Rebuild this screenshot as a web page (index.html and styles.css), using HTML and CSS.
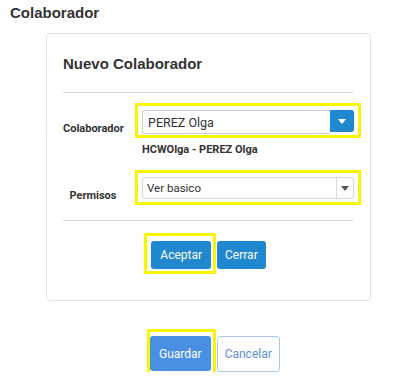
FILE: index.html
```html
<!DOCTYPE html>
<html lang="es">

<head>
    <meta charset="UTF-8" />
    <meta name="viewport" content="width=device-width, initial-scale=1.0" />
    <title>Colaborador</title>
    <link rel="stylesheet" href="styles.css">
</head>

<body>
    <h1 class="page-title">Colaborador</h1>

    <div class="card">
        <h2 class="card-title">Nuevo Colaborador</h2>
        <hr class="divider" />

        <div class="form-row">
            <label class="form-label">Colaborador</label>
            <div class="field">
                <div class="combo mark">
                    <span class="combo-value">PEREZ Olga</span>
                    <span class="combo-btn">
                        <svg width="8" height="5" viewBox="0 0 8 5"><path d="M0 0h8L4 5z" fill="#fff" /></svg>
                    </span>
                </div>
                <div class="field-note">HCWOlga - PEREZ Olga</div>
            </div>
        </div>

        <div class="form-row second">
            <label class="form-label">Permisos</label>
            <div class="field">
                <div class="select mark">
                    <span class="select-value">Ver basico</span>
                    <span class="select-arrow">
                        <svg width="8" height="5" viewBox="0 0 8 5"><path d="M0 0h8L4 5z" fill="#555" /></svg>
                    </span>
                </div>
            </div>
        </div>

        <hr class="divider bottom" />

        <div class="card-actions">
            <button class="btn btn-blue mark">Aceptar</button>
            <button class="btn btn-blue">Cerrar</button>
        </div>
    </div>

    <div class="page-actions">
        <button class="btn btn-save mark">Guardar</button>
        <button class="btn btn-cancel">Cancelar</button>
    </div>
</body>

</html>
```

FILE: styles.css
```css
body {
    margin: 0;
    font-family: Roboto, "Liberation Sans", Arial, sans-serif;
    color: #333;
    background: #fff;
}

.page-title {
    margin: 0;
    padding: 4px 0 0 10px;
    font-family: "Liberation Sans", Arial, sans-serif;
    font-size: 15px;
    line-height: 18px;
    font-weight: bold;
    color: #333;
}

.card {
    width: 291px;
    margin: 11px 0 0 46px;
    padding: 21px 16px 31px 16px;
    border: 1px solid #e2e2e2;
    border-radius: 4px;
}

.card-title {
    margin: 0;
    font-family: "Liberation Sans", Arial, sans-serif;
    font-size: 15px;
    line-height: 18px;
    font-weight: bold;
    color: #333;
}

.divider {
    margin: 19px 0 0;
    border: none;
    border-top: 1px solid #dedede;
}

.divider.bottom {
    margin-top: 17px;
}

.form-row {
    display: grid;
    grid-template-columns: 60px 1fr;
    column-gap: 19px;
    margin-top: 17px;
}

.form-row.second {
    margin-top: 21px;
}

.form-label {
    padding-top: 12px;
    font-size: 11px;
    line-height: 14px;
    font-weight: bold;
    text-align: center;
    color: #333;
    white-space: nowrap;
}

/* yellow highlight frame drawn over the element */
.mark {
    position: relative;
}

.mark::after {
    content: "";
    position: absolute;
    top: -7px;
    right: -7px;
    bottom: -4px;
    left: -7px;
    border: 3px solid #f7f700;
    pointer-events: none;
}

.combo {
    display: flex;
    height: 24px;
}

.combo-value {
    flex: 1;
    display: flex;
    align-items: center;
    padding-left: 5px;
    border: 1px solid #d0d0d0;
    border-right: none;
    border-radius: 3px 0 0 3px;
    font-size: 12.5px;
    color: #333;
}

.combo-btn {
    width: 24px;
    height: 22px;
    display: flex;
    align-items: center;
    justify-content: center;
    background: #1f88cf;
    border-radius: 0 3px 3px 0;
}

.field-note {
    margin-top: 9px;
    font-size: 11px;
    line-height: 13px;
    font-weight: bold;
    color: #333;
}

.select {
    display: flex;
    height: 20px;
    border: 1px solid #d4d4d4;
    border-radius: 3px;
}

.select.mark::after {
    top: -8px;
    right: -8px;
    bottom: -7px;
    left: -8px;
}

.select-value {
    flex: 1;
    display: flex;
    align-items: center;
    padding-left: 4px;
    font-size: 11.5px;
    color: #333;
}

.select-arrow {
    width: 16px;
    display: flex;
    align-items: center;
    justify-content: center;
    border-left: 1px solid #d8d8d8;
}

.card-actions {
    display: flex;
    justify-content: center;
    gap: 6px;
    margin-top: 20px;
}

.btn {
    font-family: Roboto, "Liberation Sans", Arial, sans-serif;
    font-size: 12px;
    border-radius: 3px;
    cursor: pointer;
}

.btn-blue {
    height: 28px;
    padding: 0 8px;
    border: none;
    background: #1f88cf;
    color: #fff;
}

.card-actions .mark {
    padding: 0 9px;
}

.card-actions .mark::after {
    top: -8px;
    right: -5px;
    bottom: -5px;
    left: -7px;
}

.page-actions {
    display: flex;
    gap: 6px;
    margin: 35px 0 0 150px;
}

.btn-save {
    height: 35px;
    padding: 0 9px;
    border: none;
    background: #4a90e2;
    color: #fff;
}

.btn-save.mark::after {
    top: -7px;
    right: -5px;
    bottom: -5px;
    left: -3px;
}

.btn-cancel {
    height: 36px;
    padding: 0 7px;
    border: 1px solid #a9c8ee;
    background: #fff;
    color: #5b8ed8;
}
```
